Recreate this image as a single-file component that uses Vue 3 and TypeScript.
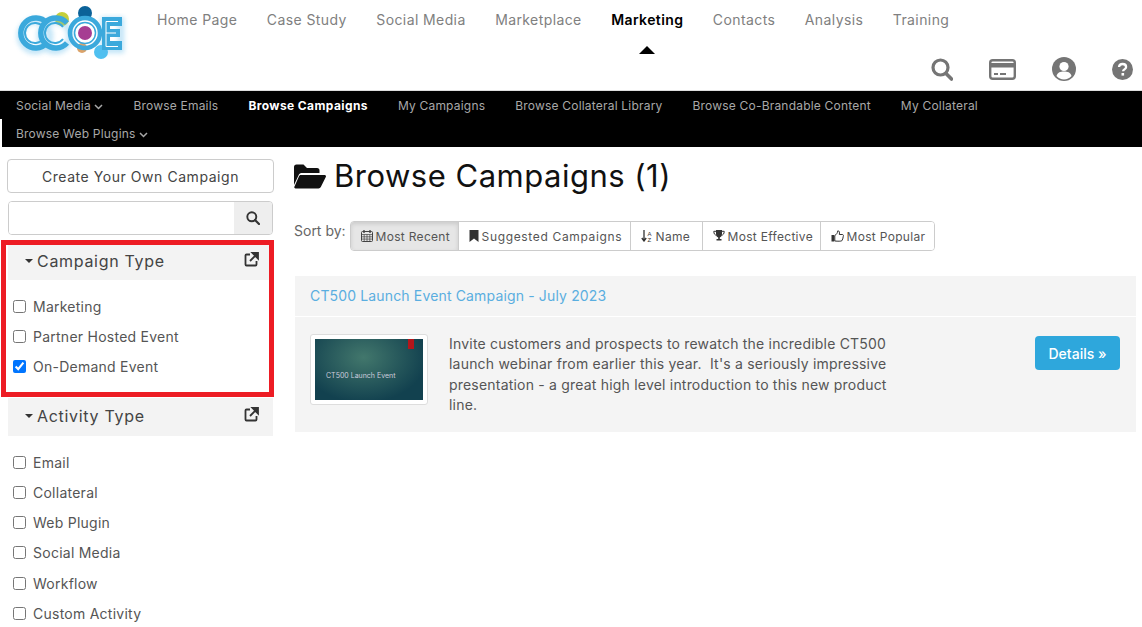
<template>
  <div class="page">
    <header class="topbar">
      <div class="logo">
        <svg width="130" height="62" viewBox="0 0 130 62">
          <defs>
            <filter id="glow" x="-20%" y="-20%" width="140%" height="140%">
              <feGaussianBlur stdDeviation="2.5" />
            </filter>
          </defs>
          <circle cx="62" cy="19" r="7" fill="#c5cf3a" />
          <circle cx="85" cy="13" r="7" fill="#0b6299" />
          <circle cx="82" cy="48" r="5" fill="#dba36a" />
          <circle cx="101" cy="52" r="7" fill="#4fc0f0" />
          <g filter="url(#glow)" opacity="0.4" fill="none" stroke="#5ab8ea" stroke-width="6">
            <circle cx="35" cy="36" r="15" />
            <circle cx="55" cy="36" r="15" />
            <path d="M104 20h17v30h-17z" />
          </g>
          <g fill="none" stroke="#3ba9dc">
            <path d="M47 23a15 15 0 1 0 0 20" stroke-width="5.500" />
            <path d="M43 27a10 10 0 1 0 0 12" stroke-width="2" />
            <path d="M67 23a15 15 0 1 0 0 20" stroke-width="5.500" />
            <path d="M63 27a10 10 0 1 0 0 12" stroke-width="2" />
            <circle cx="85" cy="33" r="15" stroke-width="4.500" />
            <circle cx="85" cy="33" r="10.500" stroke-width="1.500" />
          </g>
          <circle cx="85" cy="33" r="7" fill="#a63d92" />
          <path d="M102 17h20v9h-12v3h10v8h-10v4h12v9h-20z" fill="#3ba9dc" />
          <path d="M106 21.500h12M106 21.500v25h12M106 33h10" fill="none" stroke="#fff" stroke-width="1" />
        </svg>
      </div>
      <nav class="main-nav">
        <a v-for="item in mainNav" :key="item" :class="{ active: item === 'Marketing' }">{{ item }}</a>
      </nav>
      <div class="tools">
        <svg width="22" height="23" viewBox="0 0 22 23">
          <circle cx="9.500" cy="9.500" r="7.500" fill="none" stroke="#757575" stroke-width="3.200" />
          <path d="M15 15.500l5.500 5.500" stroke="#757575" stroke-width="3.600" stroke-linecap="round" />
        </svg>
        <svg width="27" height="21" viewBox="0 0 27 21">
          <rect x="1.200" y="1.200" width="24.600" height="18.600" rx="2.500" fill="none" stroke="#757575" stroke-width="2.400" />
          <rect x="1.200" y="4" width="24.600" height="4.500" fill="#757575" />
          <path d="M5 15h4M11 15h6" stroke="#757575" stroke-width="2" />
        </svg>
        <svg width="24" height="24" viewBox="0 0 24 24">
          <circle cx="12" cy="12" r="12" fill="#757575" />
          <circle cx="12" cy="9.500" r="4.600" fill="#fff" />
          <path d="M4.500 19c1-4 4-4.600 7.500-4.600s6.500.6 7.500 4.600a10 10 0 0 1-15 0z" fill="#fff" />
        </svg>
        <svg width="21" height="21" viewBox="0 0 21 21">
          <circle cx="10.500" cy="10.500" r="10.500" fill="#757575" />
          <path d="M7 8c.2-2 1.600-3 3.600-3 2.100 0 3.500 1.200 3.500 2.900 0 2.400-3 2.400-3 4.300" fill="none" stroke="#fff" stroke-width="2.300" />
          <rect x="9.500" y="14" width="2.600" height="2.600" fill="#fff" />
        </svg>
      </div>
    </header>

    <nav class="sub-nav">
      <div class="sub-row">
        <a v-for="item in subNav" :key="item.label" :class="{ active: item.active }">
          {{ item.label }}
          <svg v-if="item.caret" width="9" height="6" viewBox="0 0 9 6"><path d="M1 1l3.500 3.500L8 1" fill="none" stroke="currentColor" stroke-width="1.500" /></svg>
        </a>
      </div>
      <div class="sub-row second">
        <a>
          Browse Web Plugins
          <svg width="9" height="6" viewBox="0 0 9 6"><path d="M1 1l3.500 3.500L8 1" fill="none" stroke="currentColor" stroke-width="1.500" /></svg>
        </a>
      </div>
    </nav>

    <div class="content">
      <aside class="sidebar">
        <button class="create-btn">Create Your Own Campaign</button>
        <div class="search">
          <input type="text" />
          <span class="search-btn">
            <svg width="14" height="14" viewBox="0 0 14 14">
              <circle cx="5.800" cy="5.800" r="4.500" fill="none" stroke="#333" stroke-width="1.900" />
              <path d="M9 9l4 4" stroke="#333" stroke-width="2.200" stroke-linecap="round" />
            </svg>
          </span>
        </div>

        <section v-for="group in filters" :key="group.title" class="filter">
          <div class="filter-head">
            <span class="caret"></span>
            <span class="filter-title">{{ group.title }}</span>
            <svg class="popout" width="15" height="15" viewBox="0 0 15 15">
              <path d="M6 2.500H2.500a1 1 0 0 0-1 1v9a1 1 0 0 0 1 1h9a1 1 0 0 0 1-1V9" fill="none" stroke="#333" stroke-width="1.800" />
              <path d="M6 9l7-7M8.500 1h5.500v5.500z" stroke="#333" stroke-width="1.800" fill="#333" />
            </svg>
          </div>
          <label v-for="opt in group.options" :key="opt.label" class="check">
            <input type="checkbox" :checked="opt.checked" />
            <span>{{ opt.label }}</span>
          </label>
        </section>

        <div class="highlight"></div>
      </aside>

      <main class="main">
        <h1>
          <svg width="32" height="25" viewBox="0 0 32 25">
            <path d="M0 21V3a2.500 2.500 0 0 1 2.500-2.500h7L13 4h10a2.500 2.500 0 0 1 2.500 2.500V9H8c-1.500 0-2.600.6-3.300 1.900z" fill="#111" />
            <path d="M7 11h23.500c1.200 0 1.800 1.100 1.300 2.100l-5 10c-.5.900-1.200 1.400-2.300 1.400H1.500c-1 0-1.500-1-1-1.900L5 12.300c.5-.9 1.100-1.300 2-1.300z" fill="#111" />
          </svg>
          Browse Campaigns (1)
        </h1>

        <div class="sort">
          <span class="sort-label">Sort by:</span>
          <div class="sort-group">
            <button v-for="s in sorts" :key="s.label" :class="{ current: s.current }">
              <span class="sort-icon" v-html="s.icon"></span>{{ s.label }}
            </button>
          </div>
        </div>

        <article class="card">
          <div class="card-head"><a>CT500 Launch Event Campaign - July 2023</a></div>
          <div class="card-body">
            <div class="thumb">
              <div class="slide">
                <span class="flag"></span>
                <span class="slide-title">CT500 Launch Event</span>
              </div>
            </div>
            <p>Invite customers and prospects to rewatch the incredible CT500 launch webinar from earlier this year.&nbsp; It's a seriously impressive presentation - a great high level introduction to this new product line.</p>
            <button class="details">Details <span>»</span></button>
          </div>
        </article>
      </main>
    </div>
  </div>
</template>

<script setup lang="ts">
type SubItem = { label: string; active?: boolean; caret?: boolean };
type FilterGroup = { title: string; options: { label: string; checked?: boolean }[] };

const mainNav = ['Home Page', 'Case Study', 'Social Media', 'Marketplace', 'Marketing', 'Contacts', 'Analysis', 'Training'];

const subNav: SubItem[] = [
  { label: 'Social Media', caret: true },
  { label: 'Browse Emails' },
  { label: 'Browse Campaigns', active: true },
  { label: 'My Campaigns' },
  { label: 'Browse Collateral Library' },
  { label: 'Browse Co-Brandable Content' },
  { label: 'My Collateral' }
];

const filters: FilterGroup[] = [
  {
    title: 'Campaign Type',
    options: [{ label: 'Marketing' }, { label: 'Partner Hosted Event' }, { label: 'On-Demand Event', checked: true }]
  },
  {
    title: 'Activity Type',
    options: [
      { label: 'Email' },
      { label: 'Collateral' },
      { label: 'Web Plugin' },
      { label: 'Social Media' },
      { label: 'Workflow' },
      { label: 'Custom Activity' }
    ]
  }
];

const sorts = [
  {
    label: 'Most Recent',
    current: true,
    icon: '<svg width="12" height="12" viewBox="0 0 12 12"><rect x=".5" y="1.500" width="11" height="10" rx="1" fill="none" stroke="#444"/><path d="M.5 4.500h11M.5 6.800h11M.5 9.100h11M3.200 4.500v7M6 4.500v7M8.800 4.500v7" stroke="#444" stroke-width=".7"/><path d="M3 0v3M9 0v3" stroke="#444" stroke-width="1.400"/></svg>'
  },
  {
    label: 'Suggested Campaigns',
    icon: '<svg width="10" height="12" viewBox="0 0 10 12"><path d="M.5 0h9v12L5 8.500.5 12z" fill="#333"/></svg>'
  },
  {
    label: 'Name',
    icon: '<svg width="12" height="12" viewBox="0 0 12 12"><path d="M3 0v10M.8 8l2.200 3 2.200-3" fill="none" stroke="#333" stroke-width="1.300"/><text x="6.500" y="5.500" font-size="6" font-family="Liberation Sans" fill="#333">A</text><text x="6.500" y="12" font-size="6" font-family="Liberation Sans" fill="#333">Z</text></svg>'
  },
  {
    label: 'Most Effective',
    icon: '<svg width="12" height="12" viewBox="0 0 12 12"><path d="M3 0h6v4c0 2-1.200 3.200-2.200 3.500V9H8.500v1.500h-5V9h1.700V7.500C4.200 7.200 3 6 3 4z" fill="#333"/><path d="M3 1.300H.8c0 2.500 1 3.700 2.800 4M9 1.300h2.200c0 2.500-1 3.700-2.800 4" fill="none" stroke="#333"/></svg>'
  },
  {
    label: 'Most Popular',
    icon: '<svg width="13" height="12" viewBox="0 0 13 12"><rect x=".5" y="5" width="2.800" height="6.500" fill="#333"/><path d="M3.800 5.500C5.500 4.500 6.500 3 6.800.8c1.500 0 2 1.300 1.500 3.700h3c1.200 0 1.400 1 1 1.800-.2 2-.8 3.500-1.500 4.500-.8.500-4 .5-7 .2z" fill="none" stroke="#333"/></svg>'
  }
];
</script>

<style>
html,
body {
  margin: 0;
  background: #fff;
}
</style>

<style scoped>
.page {
  font-family: Inter, "Liberation Sans", sans-serif;
  color: #444;
  width: 1142px;
  height: 627px;
  overflow: hidden;
}

.topbar {
  height: 90px;
  border-bottom: 1px solid #ddd;
  display: flex;
  position: relative;
}

.logo {
  width: 157px;
  flex: none;
}

.main-nav {
  display: flex;
  gap: 29.500px;
  padding-top: 10px;
  font-size: 14px;
  line-height: 19px;
  letter-spacing: 0.4px;
  color: #808080;
  align-items: flex-start;
}

.main-nav a.active {
  color: #000;
  font-weight: 600;
  position: relative;
}

.main-nav a.active::after {
  content: "";
  position: absolute;
  left: 50%;
  margin-left: -8px;
  top: 36px;
  border: 8px solid transparent;
  border-top: 0;
  border-bottom: 8px solid #000;
}

.tools {
  position: absolute;
  right: 9px;
  top: 57px;
  display: flex;
  align-items: center;
  gap: 36px;
}

.sub-nav {
  background: #000;
  color: #a8a8a8;
  font-size: 12px;
  letter-spacing: 0.2px;
  height: 56px;
}

.sub-row {
  display: flex;
  height: 28px;
  align-items: center;
  padding-left: 16px;
  gap: 30px;
}

.sub-row.second {
  margin-left: 2px;
  padding-left: 14px;
  background: #000;
  box-shadow: -2px 0 0 #fff;
}

.sub-row a {
  white-space: nowrap;
}

.sub-row a.active {
  color: #fff;
  font-weight: 700;
  letter-spacing: 0.4px;
}

.content {
  display: flex;
}

.sidebar {
  width: 294px;
  box-sizing: border-box;
  padding: 12px 20px 0 7px;
  position: relative;
  flex: none;
}

.create-btn {
  width: 100%;
  height: 34px;
  background: #fff;
  border: 1px solid #ccc;
  border-radius: 4px;
  font: inherit;
  font-size: 14px;
  letter-spacing: 0.55px;
  color: #444;
}

.search {
  display: flex;
  height: 34px;
  margin: 8px 1px 10px;
  border: 1px solid #ccc;
  border-radius: 4px;
  box-sizing: border-box;
  overflow: hidden;
}

.search input {
  flex: 1;
  min-width: 0;
  border: 0;
  outline: 0;
  background: #fff;
}

.search-btn {
  width: 38px;
  background: #eee;
  display: flex;
  align-items: center;
  justify-content: center;
}

.filter {
  margin: 0 1px;
}

.filter-head {
  height: 35px;
  box-sizing: border-box;
  background: #f3f3f3;
  display: flex;
  align-items: center;
  padding: 0 14px 4px 17px;
  font-size: 16px;
  letter-spacing: 0.7px;
  color: #444;
  margin-bottom: 11px;
}

.filter + .filter .filter-head {
  height: 38px;
  margin-top: 16px;
  padding-bottom: 2px;
}

.filter-title {
  flex: 1;
  margin-left: 4px;
}

.caret {
  border: 4px solid transparent;
  border-top: 4px solid #333;
  border-bottom: 0;
}

.popout {
  margin-top: -2px;
}

.check {
  display: flex;
  align-items: center;
  height: 30.300px;
  font-size: 14px;
  letter-spacing: 0.25px;
  color: #555;
  padding-left: 5px;
}

.check input {
  width: 13px;
  height: 13px;
  margin: 0 7px 0 0;
  accent-color: #0075ff;
}

.highlight {
  position: absolute;
  left: 1px;
  top: 93px;
  width: 263px;
  height: 147px;
  border: 5px solid #ed1c24;
  pointer-events: none;
}

.main {
  flex: 1;
  min-width: 0;
  padding-right: 6px;
}

h1 {
  margin: 9px 0 0;
  font-size: 31px;
  line-height: 40px;
  font-weight: 400;
  letter-spacing: 0.5px;
  color: #111;
  display: flex;
  align-items: center;
  gap: 8px;
}

.sort {
  display: flex;
  margin-top: 25px;
  align-items: flex-start;
  gap: 4px;
}

.sort-label {
  font-size: 14px;
  color: #666;
  line-height: 20px;
}

.sort-group {
  display: grid;
  grid-template-columns: 108px 172px 72px 118px 113px;
  box-sizing: border-box;
  height: 30px;
  border: 1px solid #ccc;
  border-radius: 4px;
  overflow: hidden;
}

.sort-group button {
  border: 0;
  border-right: 1px solid #ccc;
  background: #fff;
  font: inherit;
  font-size: 12px;
  letter-spacing: 0.3px;
  color: #555;
  padding: 0 0 0 10px;
  display: flex;
  align-items: center;
  gap: 3px;
  white-space: nowrap;
}

.sort-group button:nth-child(2) {
  letter-spacing: 0.65px;
}

.sort-group button:last-child {
  border-right: 0;
}

.sort-group button.current {
  background: #e6e6e6;
  box-shadow: inset 0 2px 4px rgba(0, 0, 0, 0.12);
}

.sort-icon {
  display: inline-flex;
}

.card {
  margin: 25px 0 0 1px;
}

.card-head {
  height: 41px;
  background: #f4f4f4;
  display: flex;
  align-items: center;
  padding: 0 0 1px 15px;
  font-size: 14px;
  letter-spacing: 0.15px;
  color: #5aaee0;
  border-bottom: 1px solid #fff;
  box-sizing: border-box;
}

.card-body {
  background: #f4f4f4;
  display: flex;
  align-items: flex-start;
  padding: 17px 16px 18px 15px;
  height: 115px;
  box-sizing: border-box;
}

.thumb {
  width: 118px;
  height: 71px;
  box-sizing: border-box;
  background: #fff;
  border: 1px solid #ddd;
  border-radius: 3px;
  padding: 4px;
  flex: none;
}

.slide {
  height: 100%;
  background: radial-gradient(ellipse at 45% 30%, #42776c, #12414f 75%);
  position: relative;
}

.flag {
  position: absolute;
  right: 0;
  top: 0;
  width: 6px;
  height: 10px;
  margin-right: 9px;
  background: #b4161b;
}

.slide-title {
  position: absolute;
  left: 11px;
  top: 32px;
  font-size: 7px;
  color: #ccd;
  white-space: nowrap;
}

.card-body p {
  margin: 0 0 0 21px;
  width: 452px;
  font-size: 14px;
  line-height: 20.300px;
  letter-spacing: 0.2px;
  color: #555;
}

.details {
  margin: 2px 0 0 auto;
  width: 85px;
  height: 34px;
  background: #2ea7dc;
  border: 0;
  border-radius: 4px;
  color: #fff;
  font: inherit;
  font-size: 14px;
  font-weight: 500;
}
</style>
